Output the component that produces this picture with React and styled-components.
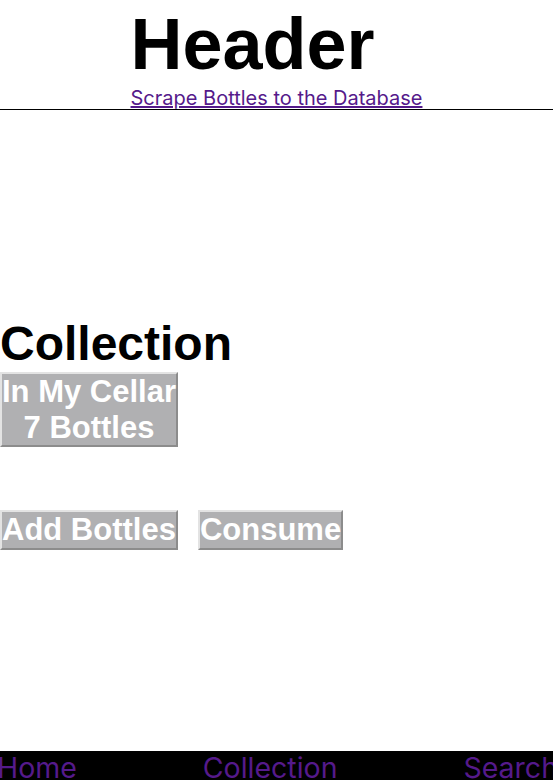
import React from "react";
import styled, { createGlobalStyle } from "styled-components";

const Global = createGlobalStyle`
  html, body { margin: 0; padding: 0; background: #fff; }
  body { font-family: Inter, "Noto Sans", sans-serif; overflow: hidden; }
`;

const Page = styled.div`
  display: flex;
  flex-direction: column;
`;

const HeaderBar = styled.header`
  border-bottom: 1px solid #000;
`;

const HeaderInner = styled.div`
  width: fit-content;
  margin: 0 auto;
  display: flex;
  flex-direction: column;
  align-items: flex-start;
`;

const Title = styled.h1`
  margin: 0;
  font-family: "Liberation Sans", Arial, sans-serif;
  font-size: 72px;
  font-weight: 700;
  line-height: 88px;
  color: #000;
`;

const HeaderLink = styled.a`
  font-size: 20px;
  line-height: 21px;
  color: #551a8b;
  text-decoration: underline;
`;

const Main = styled.main`
  padding-top: 206px;
  height: 641px;
  box-sizing: border-box;
  display: flex;
  flex-direction: column;
  align-items: flex-start;
`;

const SectionTitle = styled.h2`
  margin: 0;
  font-family: "Liberation Sans", Arial, sans-serif;
  font-size: 48px;
  font-weight: 700;
  line-height: 56px;
  color: #000;
`;

const GrayButton = styled.button`
  font-family: "Liberation Sans", Arial, sans-serif;
  font-size: 31px;
  font-weight: 700;
  line-height: 35.5px;
  color: #fff;
  background: #b0b0b2;
  border: 2px solid;
  border-color: #e3e3e3 #8c8c8c #8c8c8c #e3e3e3;
  padding: 0;
  margin: 0;
  text-align: center;
  cursor: pointer;
`;

const ButtonRow = styled.div`
  display: flex;
  gap: 20px;
  margin-top: 63px;
`;

const Nav = styled.nav`
  background: #000;
  height: 60px;
  display: flex;
  justify-content: space-between;
  align-items: flex-start;
  margin: 0 -5px 0 -3px;
`;

const NavLink = styled.a`
  font-size: 28.5px;
  line-height: 34px;
  color: #551a8b;
  text-decoration: none;
`;

export default function App() {
  return (
    <Page>
      <Global />
      <HeaderBar>
        <HeaderInner>
          <Title>Header</Title>
          <HeaderLink href="#">Scrape Bottles to the Database</HeaderLink>
        </HeaderInner>
      </HeaderBar>
      <Main>
        <SectionTitle>Collection</SectionTitle>
        <GrayButton>
          In My Cellar
          <br />7 Bottles
        </GrayButton>
        <ButtonRow>
          <GrayButton>Add Bottles</GrayButton>
          <GrayButton>Consume</GrayButton>
        </ButtonRow>
      </Main>
      <Nav>
        <NavLink href="#">Home</NavLink>
        <NavLink href="#">Collection</NavLink>
        <NavLink href="#">Search</NavLink>
      </Nav>
    </Page>
  );
}
